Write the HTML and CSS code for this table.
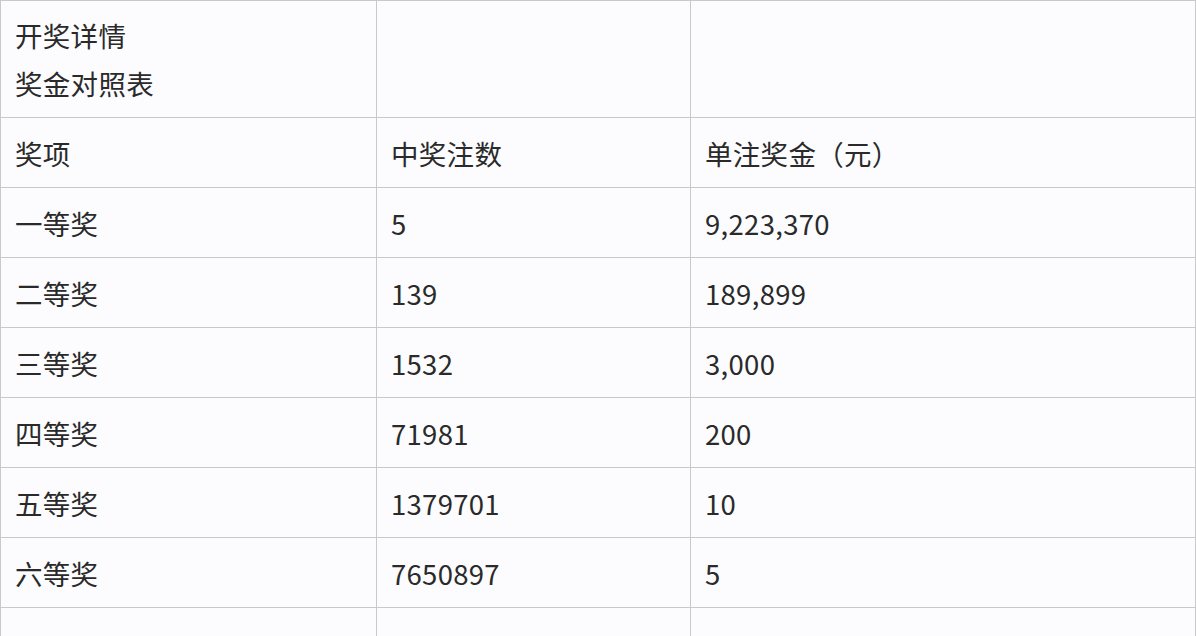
FILE: index.html
```html
<!DOCTYPE html>
<html lang="zh">
<head>
<meta charset="utf-8">
<link rel="stylesheet" href="styles.css">
</head>
<body>
<table class="prize">
  <colgroup><col class="c1"><col class="c2"><col class="c3"></colgroup>
  <tr class="head"><td><div>开奖详情</div><div>奖金对照表</div></td><td></td><td></td></tr>
  <tr><td>奖项</td><td>中奖注数</td><td>单注奖金（元）</td></tr>
  <tr><td>一等奖</td><td>5</td><td>9,223,370</td></tr>
  <tr><td>二等奖</td><td>139</td><td>189,899</td></tr>
  <tr><td>三等奖</td><td>1532</td><td>3,000</td></tr>
  <tr><td>四等奖</td><td>71981</td><td>200</td></tr>
  <tr><td>五等奖</td><td>1379701</td><td>10</td></tr>
  <tr><td>六等奖</td><td>7650897</td><td>5</td></tr>
  <tr><td></td><td></td><td></td></tr>
</table>
</body>
</html>
```
FILE: styles.css
```css
html, body {
  margin: 0;
  padding: 0;
  background: #fcfcfe;
  overflow: hidden;
}
.prize {
  border-collapse: collapse;
  table-layout: fixed;
  width: 1195px;
  font-family: "Microsoft YaHei", "Noto Sans CJK SC", sans-serif;
  font-size: 27.5px;
  letter-spacing: 0.3px;
  color: #2a2a2a;
}
.c1 { width: 376px; }
.c2 { width: 314px; }
.c3 { width: 505px; }
.prize td {
  border: 1px solid #c9c9cc;
  height: 69px;
  padding: 0 0 0 14px;
  vertical-align: middle;
  line-height: 36px;
  white-space: nowrap;
}
.prize tr.head td {
  height: 116px;
  line-height: 48px;
  padding-top: 0;
  padding-bottom: 0;
}
```
